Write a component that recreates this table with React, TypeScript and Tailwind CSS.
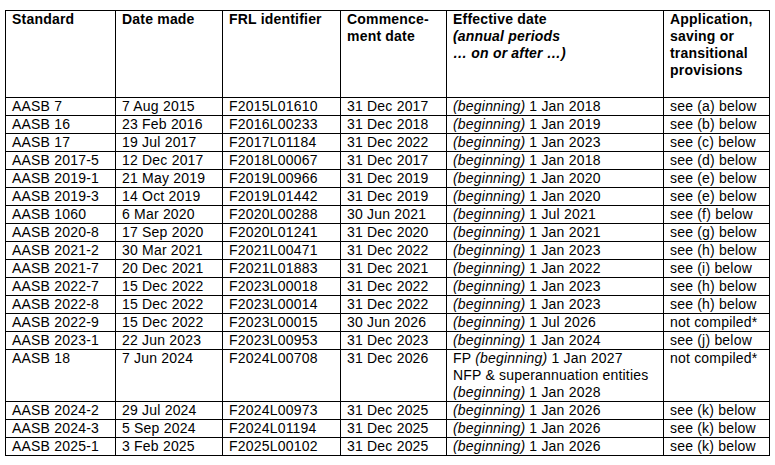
import React from "react";

type Row = [string, string, string, string, React.ReactNode, string];

const B = ({ d }: { d: string }) => (
  <>
    <i>(beginning)</i> {d}
  </>
);

const rows: Row[] = [
  ["AASB 7", "7 Aug 2015", "F2015L01610", "31 Dec 2017", <B d="1 Jan 2018" />, "see (a) below"],
  ["AASB 16", "23 Feb 2016", "F2016L00233", "31 Dec 2018", <B d="1 Jan 2019" />, "see (b) below"],
  ["AASB 17", "19 Jul 2017", "F2017L01184", "31 Dec 2022", <B d="1 Jan 2023" />, "see (c) below"],
  ["AASB 2017-5", "12 Dec 2017", "F2018L00067", "31 Dec 2017", <B d="1 Jan 2018" />, "see (d) below"],
  ["AASB 2019-1", "21 May 2019", "F2019L00966", "31 Dec 2019", <B d="1 Jan 2020" />, "see (e) below"],
  ["AASB 2019-3", "14 Oct 2019", "F2019L01442", "31 Dec 2019", <B d="1 Jan 2020" />, "see (e) below"],
  ["AASB 1060", "6 Mar 2020", "F2020L00288", "30 Jun 2021", <B d="1 Jul 2021" />, "see (f) below"],
  ["AASB 2020-8", "17 Sep 2020", "F2020L01241", "31 Dec 2020", <B d="1 Jan 2021" />, "see (g) below"],
  ["AASB 2021-2", "30 Mar 2021", "F2021L00471", "31 Dec 2022", <B d="1 Jan 2023" />, "see (h) below"],
  ["AASB 2021-7", "20 Dec 2021", "F2021L01883", "31 Dec 2021", <B d="1 Jan 2022" />, "see (i) below"],
  ["AASB 2022-7", "15 Dec 2022", "F2023L00018", "31 Dec 2022", <B d="1 Jan 2023" />, "see (h) below"],
  ["AASB 2022-8", "15 Dec 2022", "F2023L00014", "31 Dec 2022", <B d="1 Jan 2023" />, "see (h) below"],
  ["AASB 2022-9", "15 Dec 2022", "F2023L00015", "30 Jun 2026", <B d="1 Jul 2026" />, "not compiled*"],
  ["AASB 2023-1", "22 Jun 2023", "F2023L00953", "31 Dec 2023", <B d="1 Jan 2024" />, "see (j) below"],
  [
    "AASB 18",
    "7 Jun 2024",
    "F2024L00708",
    "31 Dec 2026",
    <>
      FP <i>(beginning)</i> 1 Jan 2027
      <br />
      NFP &amp; superannuation entities
      <br />
      <i>(beginning)</i> 1 Jan 2028
    </>,
    "not compiled*",
  ],
  ["AASB 2024-2", "29 Jul 2024", "F2024L00973", "31 Dec 2025", <B d="1 Jan 2026" />, "see (k) below"],
  ["AASB 2024-3", "5 Sep 2024", "F2024L01194", "31 Dec 2025", <B d="1 Jan 2026" />, "see (k) below"],
  ["AASB 2025-1", "3 Feb 2025", "F2025L00102", "31 Dec 2025", <B d="1 Jan 2026" />, "see (k) below"],
];

const th = "border border-black align-top text-left font-bold px-[6px] py-0";
const td = "border border-black align-top px-[6px] py-0 whitespace-nowrap";

export default function App() {
  return (
    <div
      className="w-[775px] h-[465px] bg-white text-black pl-[5px] pt-[10px]"
      style={{ fontFamily: '"Liberation Sans", Arial, sans-serif' }}
    >
      <table className="border-collapse table-fixed w-[764px] text-[14px] leading-[17px] tracking-[0.2px]">
        <colgroup>
          <col className="w-[110px]" />
          <col className="w-[107px]" />
          <col className="w-[118px]" />
          <col className="w-[106px]" />
          <col className="w-[217px]" />
          <col className="w-[106px]" />
        </colgroup>
        <thead>
          <tr className="h-[87px]">
            <th className={th}>Standard</th>
            <th className={th}>Date made</th>
            <th className={th}>FRL identifier</th>
            <th className={th}>
              Commence-
              <br />
              ment date
            </th>
            <th className={th}>
              Effective date
              <br />
              <i>(annual periods</i>
              <br />
              <i>… on or after …)</i>
            </th>
            <th className={th}>
              Application,
              <br />
              saving or
              <br />
              transitional
              <br />
              provisions
            </th>
          </tr>
        </thead>
        <tbody>
          {rows.map((r, i) => (
            <tr key={i}>
              {r.map((c, j) => (
                <td key={j} className={td}>
                  {c}
                </td>
              ))}
            </tr>
          ))}
        </tbody>
      </table>
    </div>
  );
}
